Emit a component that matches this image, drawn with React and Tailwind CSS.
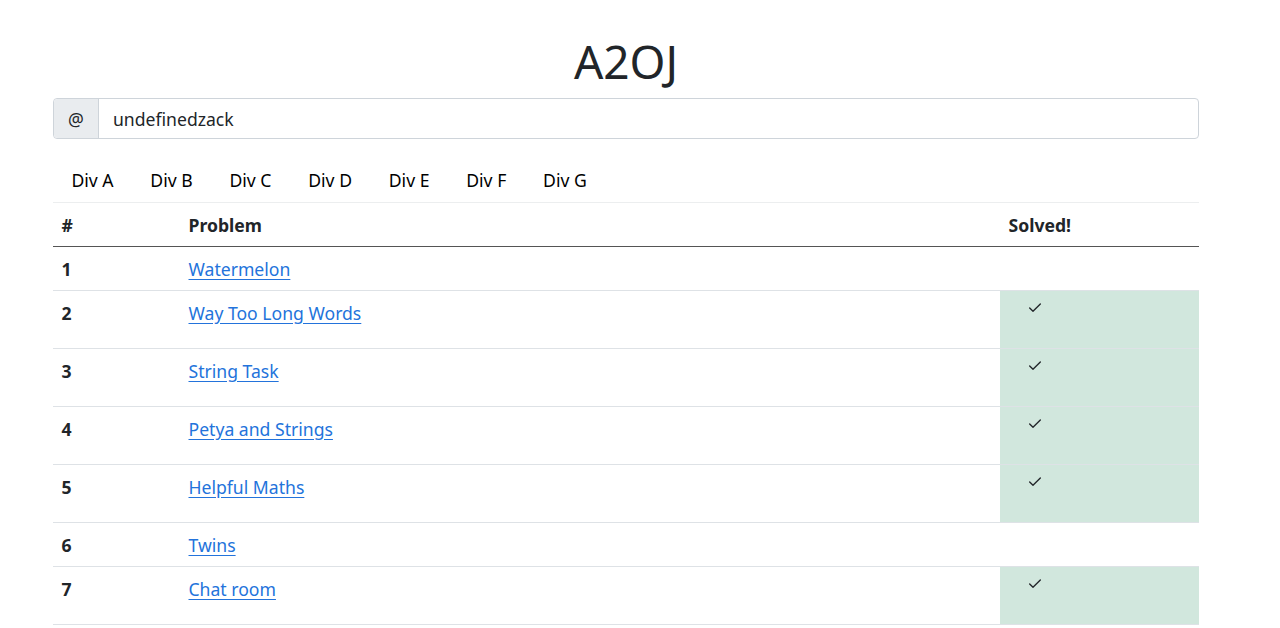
import { Check } from 'lucide-react';

const problems = [
  { id: 1, name: 'Watermelon', solved: false },
  { id: 2, name: 'Way Too Long Words', solved: true },
  { id: 3, name: 'String Task', solved: true },
  { id: 4, name: 'Petya and Strings', solved: true },
  { id: 5, name: 'Helpful Maths', solved: true },
  { id: 6, name: 'Twins', solved: false },
  { id: 7, name: 'Chat room', solved: true },
];

const divs = ['Div A', 'Div B', 'Div C', 'Div D', 'Div E', 'Div F', 'Div G'];

const App = () => {
  return (
    <div
      className="min-h-screen bg-white text-[#212529] text-[17.6px] leading-[26px]"
      style={{ fontFamily: '"Noto Sans", "Open Sans", sans-serif' }}
    >
      <div className="ml-[53px] w-[1146px]">
        {/* Title */}
        <h1 className="pt-[34px] pb-[9px] text-center text-[46px] leading-[55px] font-normal">
          A2OJ
        </h1>

        {/* Handle input */}
        <div className="flex h-[41px] rounded-[4px] border border-[#ced4da]">
          <span className="flex w-[45px] items-center justify-center bg-[#e9ecef] border-r border-[#ced4da] rounded-l-[4px]">
            @
          </span>
          <div className="flex items-center pl-[14px]">undefinedzack</div>
        </div>

        {/* Division tabs */}
        <nav className="mt-[28px] flex">
          {divs.map((d) => (
            <a key={d} className="px-[18.4px] pb-[9px] text-black cursor-pointer">
              {d}
            </a>
          ))}
        </nav>

        {/* Problems table */}
        <table className="w-full border-collapse">
          <thead>
            <tr className="border-t border-[#eceeef]">
              <th className="w-[127px] p-[8.5px] text-left font-bold">#</th>
              <th className="p-[8.5px] text-left font-bold">Problem</th>
              <th className="w-[199px] p-[8.5px] text-left font-bold">Solved!</th>
            </tr>
          </thead>
          <tbody className="border-t border-[#555]">
            {problems.map((p) => (
              <tr key={p.id} className="border-b border-[#dee2e6] align-top">
                <td className="p-[8.5px] font-bold">{p.id}</td>
                <td className="p-[8.5px]">
                  <a className="text-[#2373db] underline underline-offset-[3px] cursor-pointer">
                    {p.name}
                  </a>
                </td>
                <td className={p.solved ? 'p-[8.5px] bg-[#d1e7dd]' : 'p-[8.5px]'}>
                  {p.solved && (
                    <div className="h-[40px] pl-[18.5px]">
                      <Check size={16} strokeWidth={2} className="text-[#212529]" />
                    </div>
                  )}
                </td>
              </tr>
            ))}
          </tbody>
        </table>
      </div>
    </div>
  );
};

export default App;
